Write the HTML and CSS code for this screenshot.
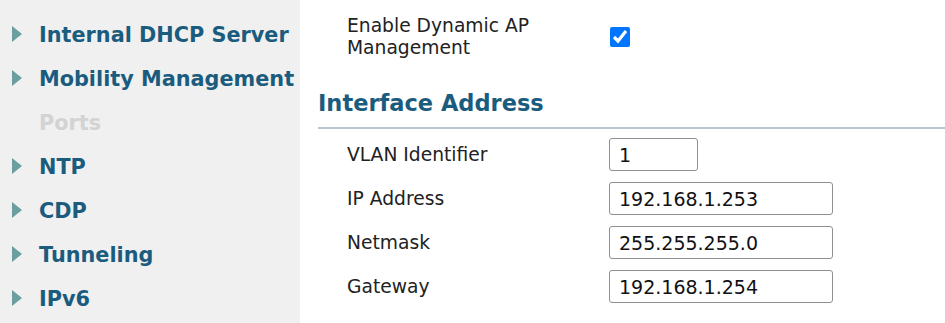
FILE: index.html
```html
<!DOCTYPE html>
<html lang="en">
<head>
    <meta charset="UTF-8">
    <meta name="viewport" content="width=device-width, initial-scale=1.0">
    <title>Controller General</title>
    <link rel="stylesheet" href="styles.css">
</head>
<body>
    <div class="page">
        <ul class="sidebar">
            <li class="item"><span class="arrow"></span>Internal DHCP Server</li>
            <li class="item"><span class="arrow"></span>Mobility Management</li>
            <li class="item disabled">Ports</li>
            <li class="item"><span class="arrow"></span>NTP</li>
            <li class="item"><span class="arrow"></span>CDP</li>
            <li class="item"><span class="arrow"></span>Tunneling</li>
            <li class="item"><span class="arrow"></span>IPv6</li>
        </ul>

        <div class="content">
            <div class="form-row check-row">
                <label class="label" for="dynap">Enable Dynamic AP Management</label>
                <input type="checkbox" id="dynap" class="check" checked>
            </div>

            <h2 class="section-title">Interface Address</h2>

            <div class="fields">
                <div class="form-row">
                    <label class="label" for="vlan">VLAN Identifier</label>
                    <input type="text" id="vlan" class="field short" value="1">
                </div>
                <div class="form-row">
                    <label class="label" for="ip">IP Address</label>
                    <input type="text" id="ip" class="field" value="192.168.1.253">
                </div>
                <div class="form-row">
                    <label class="label" for="mask">Netmask</label>
                    <input type="text" id="mask" class="field" value="255.255.255.0">
                </div>
                <div class="form-row">
                    <label class="label" for="gw">Gateway</label>
                    <input type="text" id="gw" class="field" value="192.168.1.254">
                </div>
            </div>
        </div>
    </div>
</body>
</html>
```

FILE: styles.css
```css
body {
    margin: 0;
    font-family: "DejaVu Sans", Verdana, sans-serif;
    background-color: white;
}

.page {
    display: flex;
    height: 323px;
    overflow: hidden;
}

.sidebar {
    list-style: none;
    margin: 0;
    padding: 13px 0 0 0;
    width: 300px;
    flex-shrink: 0;
    background-color: #f0f0f0;
}

.item {
    display: flex;
    align-items: center;
    height: 44px;
    padding-left: 39px;
    position: relative;
    font-size: 20.8px;
    font-weight: bold;
    color: #1b5c7e;
    white-space: nowrap;
}

.item.disabled {
    color: #d3d3d3;
}

.arrow {
    position: absolute;
    left: 12px;
    top: 13px;
    width: 0;
    height: 0;
    border-top: 8px solid transparent;
    border-bottom: 8px solid transparent;
    border-left: 10px solid #6b9e9e;
}

.content {
    flex: 1;
    padding: 15px 0 0 18px;
    color: #222;
    font-size: 18.7px;
}

.form-row {
    display: flex;
    align-items: center;
    padding-left: 29px;
}

.label {
    width: 262px;
    line-height: 22px;
}

.check-row .label {
    width: 230px;
    margin-right: 32px;
}

.check {
    width: 20px;
    height: 20px;
    margin: 0 0 0 1px;
    accent-color: #0075ff;
}

.section-title {
    margin: 31px 0 0 0;
    padding-bottom: 11px;
    border-bottom: 2px solid #bcc3d3;
    font-size: 22.5px;
    line-height: 26px;
    color: #1b5c7e;
}

.fields {
    display: flex;
    flex-direction: column;
    gap: 11px;
    margin-top: 9px;
}

.field {
    box-sizing: border-box;
    width: 224px;
    height: 33px;
    padding: 0 9px;
    border: 1px solid #8f8f8f;
    border-radius: 3px;
    font-family: inherit;
    font-size: 19px;
    color: #111;
}

.field.short {
    width: 89px;
}
```
